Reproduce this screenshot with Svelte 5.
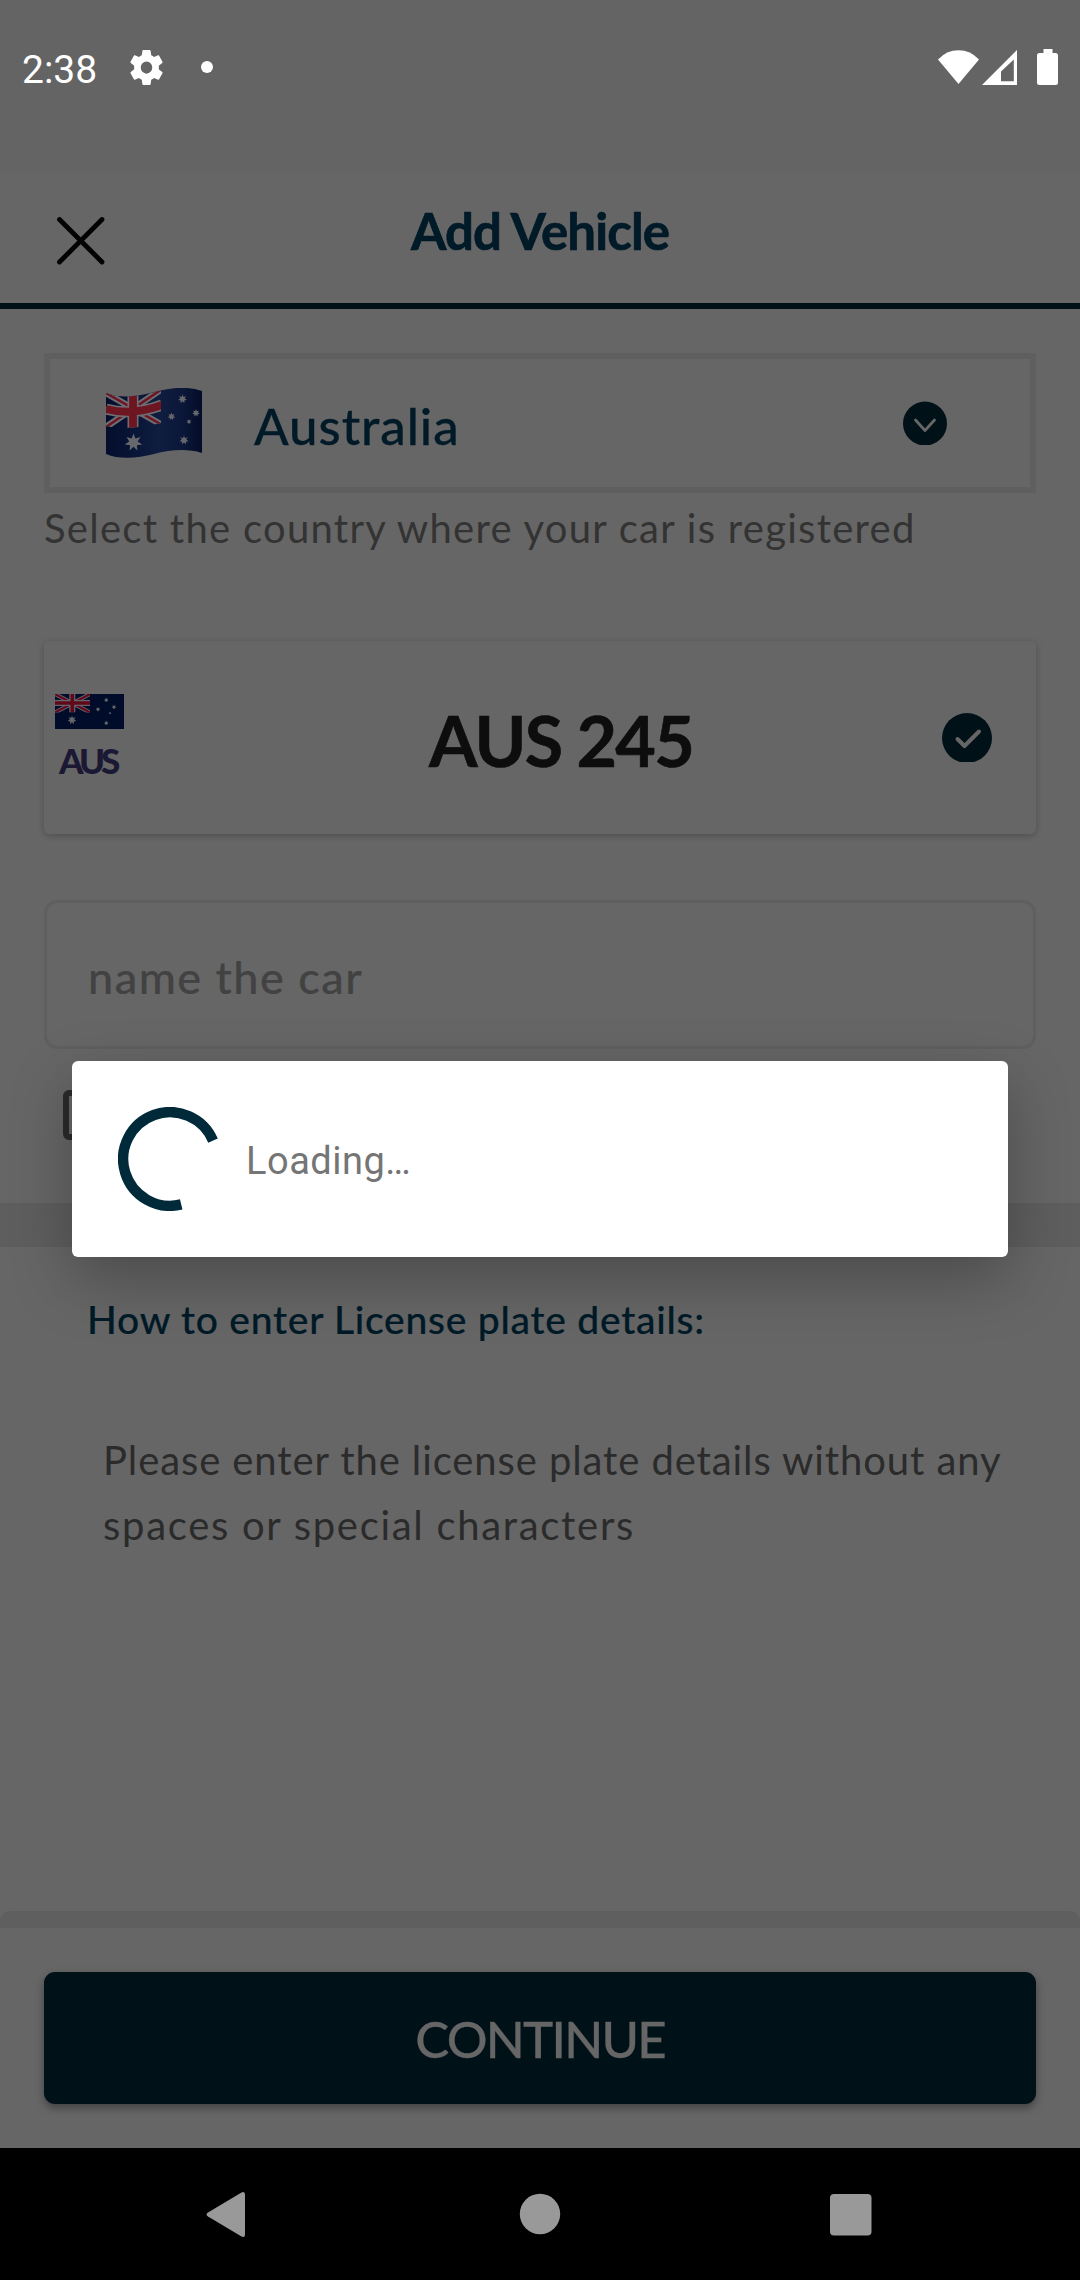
<script>
  // Points of a star with n rays around (cx, cy)
  function star(cx, cy, r, n = 7, inner = 0.48) {
    const pts = [];
    for (let i = 0; i < n * 2; i++) {
      const radius = i % 2 ? r * inner : r;
      const a = (Math.PI * i) / n - Math.PI / 2;
      pts.push(`${(cx + radius * Math.cos(a)).toFixed(2)},${(cy + radius * Math.sin(a)).toFixed(2)}`);
    }
    return pts.join(' ');
  }

  const wavyStars = [
    [27.5, 54.5, 9], [76.5, 11, 4.6], [90, 25, 4], [65.5, 28.5, 4], [83, 33.7, 2.6], [78, 52.3, 4.8]
  ];
  const flatStars = [
    [17, 26, 4.6], [51.3, 6, 2.4], [43, 15.3, 2.4], [59, 13, 2.4], [55, 19, 1.4], [51.3, 29, 2.4]
  ];
</script>

<div class="screen">
  <div class="status">
    <span class="time">2:38</span>
    <svg class="gear" viewBox="2 2 20 20" preserveAspectRatio="none">
      <path fill="#fff" fill-rule="evenodd" d="M19.43 12.98c.04-.32.07-.64.07-.98s-.03-.66-.07-.98l2.11-1.65c.19-.15.24-.42.12-.64l-2-3.46c-.12-.22-.39-.3-.61-.22l-2.49 1c-.52-.4-1.08-.73-1.69-.98l-.38-2.65C14.46 2.18 14.25 2 14 2h-4c-.25 0-.46.18-.49.42l-.38 2.65c-.61.25-1.17.59-1.69.98l-2.49-1c-.23-.09-.49 0-.61.22l-2 3.46c-.13.22-.07.49.12.64l2.11 1.65c-.04.32-.07.65-.07.98s.03.66.07.98l-2.11 1.65c-.19.15-.24.42-.12.64l2 3.46c.12.22.39.3.61.22l2.49-1c.52.4 1.08.73 1.69.98l.38 2.65c.03.24.24.42.49.42h4c.25 0 .46-.18.49-.42l.38-2.65c.61-.25 1.17-.59 1.69-.98l2.49 1c.23.09.49 0 .61-.22l2-3.46c.12-.22.07-.49-.12-.64l-2.11-1.65zM12 15.5a3.5 3.5 0 1 1 0-7 3.5 3.5 0 0 1 0 7z" />
    </svg>
    <i class="dot"></i>
    <svg class="signals" width="120" height="36" viewBox="0 0 120 36">
      <path fill="#fff" d="M0 10.5Q8.500 1.300 20.500 1.300T41 10.500L20.500 35Z" />
      <path fill="#fff" fill-rule="evenodd" d="M44 36 79 1V36ZM63 32.300H75.800V10.500L63 22.500Z" />
      <path fill="#fff" d="M105.500 0h9v4h3.500a2.500 2.500 0 0 1 2 2.500V33.500a2.500 2.500 0 0 1-2.500 2.500h-16a2.500 2.500 0 0 1-2.500-2.500V6.500a2.500 2.500 0 0 1 2.500-2.500h4Z" />
    </svg>
  </div>

  <header>
    <svg class="close" width="48" height="48" viewBox="0 0 48 48">
      <path d="M2.500 2.500 45 45M45 2.500 2.500 45" stroke="#000" stroke-width="4.800" stroke-linecap="round" />
    </svg>
    <h1>Add Vehicle</h1>
  </header>

  <main>
    <div class="select">
      <svg class="flag" width="97" height="71" viewBox="0 0 97 71">
        <defs>
          <clipPath id="wave"><path d="M0 5C12 10 26 9 40 6 56 2 76-4 96 3V65C80 60 64 62 48 66 32 70 14 72 0 66Z" /></clipPath>
          <clipPath id="canton"><path d="M0 5C12 9 36 9 55 2V35C38 39 16 42 0 38Z" /></clipPath>
          <linearGradient id="shade">
            <stop offset="0" stop-color="#040d2c" />
            <stop offset=".55" stop-color="#0f1d40" />
            <stop offset=".8" stop-color="#0b1738" />
            <stop offset="1" stop-color="#030b27" />
          </linearGradient>
        </defs>
        <g clip-path="url(#wave)">
          <rect width="97" height="71" fill="url(#shade)" />
          <g clip-path="url(#canton)" fill="none">
            <path d="M0 5 56 37M56 1 0 39" stroke="#6d6d72" stroke-width="6.500" />
            <path d="M0 5 56 37M56 1 0 39" stroke="#6e1522" stroke-width="2.400" />
            <path d="M27 0V42M0 21Q27 28 56 17" stroke="#6d6d72" stroke-width="11" />
            <path d="M27 0V42M0 21Q27 28 56 17" stroke="#6e1522" stroke-width="7.800" />
          </g>
          {#each wavyStars as [x, y, r]}
            <polygon points={star(x, y, r)} fill="#66686e" />
          {/each}
        </g>
      </svg>
      <span class="country">Australia</span>
      <svg class="chevron" width="44" height="44" viewBox="0 0 44 44">
        <circle cx="22" cy="22.500" r="22" fill="#001118" />
        <path d="M12.500 19 22 29.500 31.500 19" fill="none" stroke="#666" stroke-width="2.800" stroke-linecap="round" stroke-linejoin="round" />
      </svg>
    </div>
    <p class="help">Select the country where your car is registered</p>

    <div class="plate">
      <div class="badge">
        <svg width="69" height="35" viewBox="0 0 69 35">
          <rect width="69" height="35" fill="#000c29" />
          <svg width="35" height="18.500">
            <path d="M0 0 35 18.500M35 0 0 18.500" stroke="#66646b" stroke-width="4" />
            <path d="M0 0 35 18.500M35 0 0 18.500" stroke="#60071a" stroke-width="2" />
            <path d="M17.300 0V18.500M0 9H35" stroke="#66646b" stroke-width="6" />
            <path d="M17.300 0V18.500M0 9H35" stroke="#60071a" stroke-width="3.600" />
          </svg>
          {#each flatStars as [x, y, r]}
            <polygon points={star(x, y, r)} fill="#66666c" />
          {/each}
        </svg>
        <span>AUS</span>
      </div>
      <span class="number">AUS 245</span>
      <svg class="check" width="50" height="49" viewBox="0 0 50 49">
        <circle cx="25" cy="25" r="25" fill="#001118" />
        <path d="M15.500 26 22.500 33 37 18.500" fill="none" stroke="#666" stroke-width="4" stroke-linecap="round" stroke-linejoin="round" />
      </svg>
    </div>

    <div class="field">name the car</div>
    <i class="box"></i>
  </main>

  <div class="band"></div>

  <section>
    <h2>How to enter License plate details:</h2>
    <p><span class="l1">Please enter the license plate details without any</span><br /><span class="l2">spaces or special characters</span></p>
  </section>

  <footer>
    <div class="lip"></div>
    <button>CONTINUE</button>
  </footer>

  <nav>
    <svg width="1080" height="132" viewBox="0 0 1080 132" fill="#999">
      <path d="M208 64.500 241.500 44.400Q245 43 245 46.500V86.500Q245 90 241.500 88.600L208 68.500Q205 66.500 208 64.500Z" />
      <circle cx="540" cy="66" r="20.200" />
      <rect x="830" y="46" width="41.500" height="41.500" rx="4" />
    </svg>
  </nav>

  <div class="dialog">
    <svg class="spinner" width="104" height="104" viewBox="-52 -52 104 104">
      <path d="M43-18.400A46.800 46.800 0 1 0 11.200 45.400" fill="none" stroke="#002a3a" stroke-width="10.400" />
    </svg>
    <span>Loading…</span>
  </div>
</div>

<style>
  :global(body) { margin: 0; background: #666; }
  .screen {
    position: relative;
    display: flex;
    flex-direction: column;
    width: 1080px;
    height: 2280px;
    background: #666;
    overflow: hidden;
    font-family: Lato, "Open Sans", sans-serif;
    white-space: nowrap;
  }
  svg { display: block; flex: none; }
  h1, h2, p { margin: 0; }

  .status {
    box-sizing: border-box;
    height: 171px;
    padding: 49px 22px 0 22px;
    background: #646464;
    display: flex;
    align-items: flex-start;
  }
  .time { width: 108px; padding-top: 1px; font: 400 39px/41px Roboto, sans-serif; color: #fff; }
  .gear { width: 33px; height: 35px; margin-top: 1px; }
  .dot { width: 12px; height: 12px; margin: 12px 0 0 38px; border-radius: 50%; background: #fff; }
  .signals { margin-left: auto; }

  header {
    box-sizing: border-box;
    height: 138px;
    border-bottom: 6px solid #001018;
    display: grid;
    grid-template-columns: 1fr auto 1fr;
    align-items: start;
  }
  .close { margin: 46px 0 0 57px; }
  h1 { font-size: 51px; font-weight: 700; line-height: 120px; color: #001a28; letter-spacing: -0.9px; -webkit-text-stroke: 0.7px; }

  main { padding: 44px 44px 0; display: flex; flex-direction: column; }
  .select {
    box-sizing: border-box;
    height: 140px;
    border: 6px solid #5f5f5f;
    padding: 0 83px 0 56px;
    display: flex;
    align-items: center;
  }
  .country { margin: 4px 0 0 51px; font-size: 51px; font-weight: 500; letter-spacing: 0.95px; -webkit-text-stroke: 0.3px; color: #001a28; }
  .chevron { margin-left: auto; }
  .help { height: 67px; font-size: 40px; line-height: 71px; letter-spacing: 1.27px; color: #333; }

  .plate {
    box-sizing: border-box;
    height: 193px;
    margin-top: 81px;
    padding: 0 44px 0 11px;
    border-radius: 6px;
    box-shadow: 0 2px 7px rgba(0, 0, 0, .22);
    display: flex;
    align-items: center;
  }
  .badge { width: 69px; display: flex; flex-direction: column; }
  .badge span { margin: 12px 0 2px 4px; font-size: 35px; line-height: 38px; font-weight: 900; letter-spacing: -4px; color: #1a1833; }
  .number { margin: 5px 0 0 305px; font-size: 70px; font-weight: 700; letter-spacing: -1.8px; -webkit-text-stroke: 0.6px; color: #0d0d0d; }
  .check { margin-left: auto; }

  .field {
    box-sizing: border-box;
    height: 149px;
    margin-top: 66px;
    padding: 6px 0 0 41px;
    border: 3px solid #5f5f5f;
    border-radius: 13px;
    font-size: 45px;
    font-weight: 500;
    line-height: 137px;
    letter-spacing: 1.5px;
    -webkit-text-stroke: 0.2px;
    color: #424242;
  }
  .box {
    box-sizing: border-box;
    width: 50px;
    height: 50px;
    margin: 41px 0 0 19px;
    border: 6px solid #2b2b2b;
    border-radius: 6px;
  }
  .band { height: 44px; margin-top: 63px; background: #5e5e5e; }

  section { padding: 48px 0 0 87px; }
  h2 { font-size: 39px; font-weight: 500; line-height: 49px; letter-spacing: 0.75px; -webkit-text-stroke: 0.2px; color: #001a28; }
  section p { margin: 84px 0 0 16px; font-size: 40px; line-height: 65px; color: #2b2b2b; }
  .l1 { letter-spacing: 0.9px; }
  .l2 { letter-spacing: 1.7px; }

  footer { height: 237px; margin-top: auto; display: flex; flex-direction: column; }
  .lip { height: 17px; background: #5f5f5f; border-radius: 11px 11px 0 0; }
  button {
    height: 132px;
    margin: 44px 44px 0;
    padding: 1px 0 0;
    border: 0;
    border-radius: 11px;
    background: #001118;
    box-shadow: 0 4px 9px rgba(0, 0, 0, .36);
    font: 500 51px/1 Lato, sans-serif;
    letter-spacing: -1.8px;
    -webkit-text-stroke: 0.3px;
    color: #666;
  }
  nav { height: 132px; background: #000; }

  .dialog {
    position: absolute;
    left: 72px;
    top: 1061px;
    box-sizing: border-box;
    width: 936px;
    height: 196px;
    padding-left: 46px;
    border-radius: 6px;
    background: #fff;
    box-shadow: 0 22px 62px rgba(0, 0, 0, .27);
    display: flex;
    align-items: center;
  }
  .dialog span { margin: 3px 0 0 24px; font: 400 38px/1 Roboto, sans-serif; letter-spacing: 0.5px; color: #757575; }
</style>
